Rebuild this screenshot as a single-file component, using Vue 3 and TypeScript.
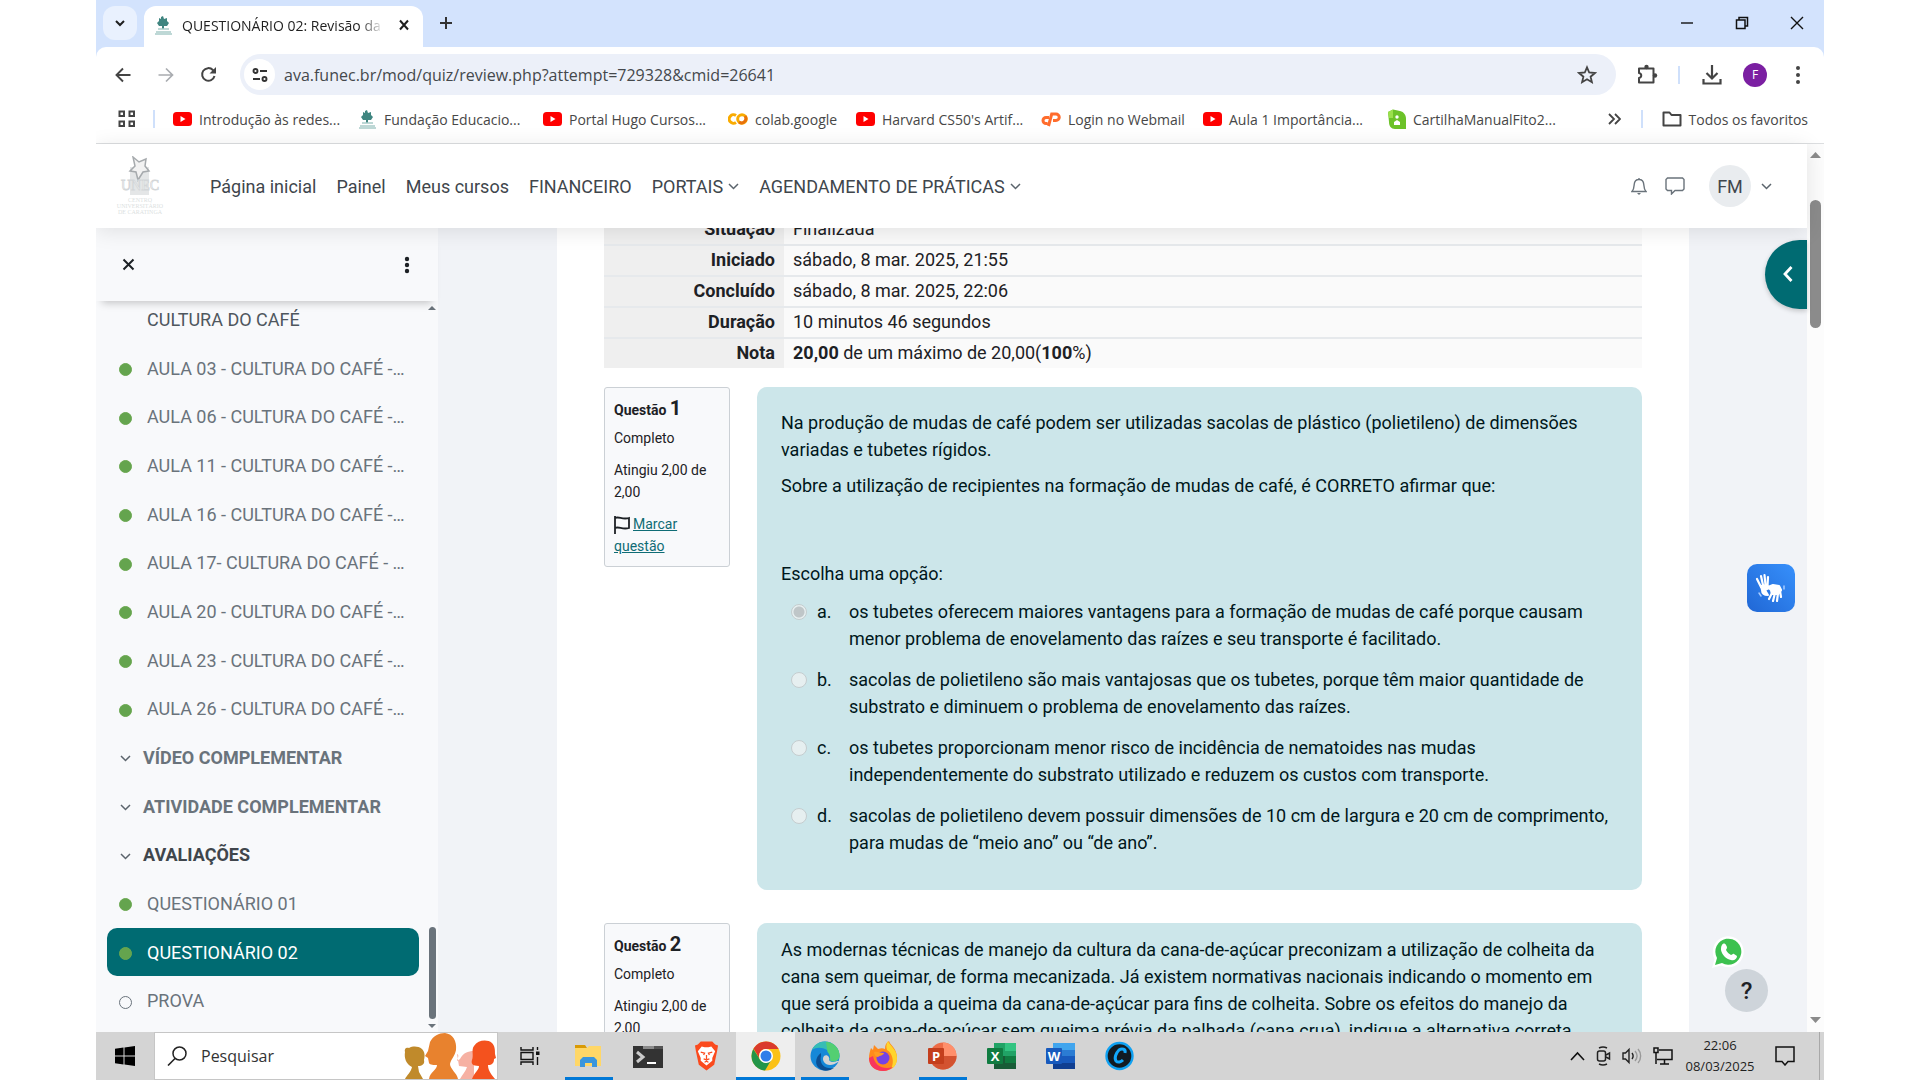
<script setup lang="ts">
import { ref } from 'vue'

type Bookmark = { label: string; icon: 'youtube' | 'funec' | 'colab' | 'cpanel' | 'issuu'; size: string }
type Row = { label: string; kind: 'first' | 'done' | 'todo' | 'section' | 'current-section' | 'active' }

const bookmarks: Bookmark[] = [
  { label: 'Introdução às redes...', icon: 'youtube', size: 'wide' },
  { label: 'Fundação Educacio...', icon: 'funec', size: 'wide' },
  { label: 'Portal Hugo Cursos...', icon: 'youtube', size: 'wide' },
  { label: 'colab.google', icon: 'colab', size: 'small' },
  { label: "Harvard CS50's Artif...", icon: 'youtube', size: 'wide' },
  { label: 'Login no Webmail', icon: 'cpanel', size: 'medium' },
  { label: 'Aula 1 Importância...', icon: 'youtube', size: 'wide' },
  { label: 'CartilhaManualFito2...', icon: 'issuu', size: 'wide' },
]

const rows: Row[] = [
  { label: 'CULTURA DO CAFÉ', kind: 'first' },
  { label: 'AULA 03 - CULTURA DO CAFÉ -…', kind: 'done' },
  { label: 'AULA 06 - CULTURA DO CAFÉ -…', kind: 'done' },
  { label: 'AULA 11 - CULTURA DO CAFÉ -…', kind: 'done' },
  { label: 'AULA 16 - CULTURA DO CAFÉ -…', kind: 'done' },
  { label: 'AULA 17- CULTURA DO CAFÉ - …', kind: 'done' },
  { label: 'AULA 20 - CULTURA DO CAFÉ -…', kind: 'done' },
  { label: 'AULA 23 - CULTURA DO CAFÉ -…', kind: 'done' },
  { label: 'AULA 26 - CULTURA DO CAFÉ -…', kind: 'done' },
  { label: 'VÍDEO COMPLEMENTAR', kind: 'section' },
  { label: 'ATIVIDADE COMPLEMENTAR', kind: 'section' },
  { label: 'AVALIAÇÕES', kind: 'current-section' },
  { label: 'QUESTIONÁRIO 01', kind: 'done' },
  { label: 'QUESTIONÁRIO 02', kind: 'active' },
  { label: 'PROVA', kind: 'todo' },
]

const options = [
  { key: 'a', text: 'os tubetes oferecem maiores vantagens para a formação de mudas de café porque causam menor problema de enovelamento das raízes e seu transporte é facilitado.' },
  { key: 'b', text: 'sacolas de polietileno são mais vantajosas que os tubetes, porque têm maior quantidade de substrato e diminuem o problema de enovelamento das raízes.' },
  { key: 'c', text: 'os tubetes proporcionam menor risco de incidência de nematoides nas mudas independentemente do substrato utilizado e reduzem os custos com transporte.' },
  { key: 'd', text: 'sacolas de polietileno devem possuir dimensões de 10 cm de largura e 20 cm de comprimento, para mudas de “meio ano” ou “de ano”.' },
]

const address = ref('ava.funec.br/mod/quiz/review.php?attempt=729328&cmid=26641')
const query = ref('')
const answer = ref('a')
</script>

<template>
  <div class="desktop">
    <header class="browser">
      <div class="tabstrip">
        <button class="tab-search" aria-label="Pesquisar guias">
          <svg width="12" height="12" viewBox="0 0 12 12"><path d="M2 4l4 4 4-4" fill="none" stroke="#1f1f1f" stroke-width="2" /></svg>
        </button>
        <div class="tab">
          <svg class="fav" width="17" height="19" viewBox="0 0 17 19"><path d="M6 1l2-1 1 3 3-1v3l2 2-2 3H9v3H7v-3H4L2 7l2-2V2l2 1z" fill="#3f8580" /><path d="M3 13h11M1 16h15M0 18h17" stroke="#a9cbc9" stroke-width="1.500" /></svg>
          <span class="tab-title">QUESTIONÁRIO 02: Revisão da t</span>
          <button class="plain" aria-label="Fechar guia">
            <svg width="12" height="12" viewBox="0 0 12 12"><path d="M2 1.500l8 9M10 1.500l-8 9" stroke="#1f1f1f" stroke-width="2" /></svg>
          </button>
        </div>
        <button class="plain new-tab" aria-label="Nova guia">
          <svg width="14" height="14" viewBox="0 0 14 14"><path d="M7 1v12M1 7h12" stroke="#333" stroke-width="2" /></svg>
        </button>
        <div class="window-buttons">
          <button class="plain" aria-label="Minimizar"><svg width="14" height="14" viewBox="0 0 14 14"><path d="M1 7h12" stroke="#111" stroke-width="1.4" /></svg></button>
          <button class="plain" aria-label="Restaurar"><svg width="14" height="14" viewBox="0 0 14 14"><path d="M4 4V1.500h8.500v8.500H10M1.500 4H10v8.500H1.500z" fill="none" stroke="#111" stroke-width="1.500" /></svg></button>
          <button class="plain" aria-label="Fechar"><svg width="14" height="14" viewBox="0 0 14 14"><path d="M1 1l12 12M13 1L1 13" stroke="#111" stroke-width="1.400" /></svg></button>
        </div>
      </div>

      <div class="toolbar-wrap">
        <div class="toolbar">
          <button class="plain step" aria-label="Voltar"><svg width="16" height="16" viewBox="0 0 16 16"><path d="M15.500 8H2M8 1.500L1.500 8 8 14.500" fill="none" stroke="#444" stroke-width="1.900" /></svg></button>
          <button class="plain step" aria-label="Avançar"><svg width="16" height="16" viewBox="0 0 16 16"><path d="M.5 8H14M8 1.500L14.500 8 8 14.500" fill="none" stroke="#a9acb0" stroke-width="1.700" /></svg></button>
          <button class="plain step" aria-label="Recarregar"><svg width="17" height="17" viewBox="0 0 17 17"><path d="M14.500 10a6.300 6.300 0 1 1-1.600-6L15 6" fill="none" stroke="#444" stroke-width="2" /><path d="M16 1v6.500H9.500z" fill="#444" /></svg></button>
          <div class="address">
            <span class="site-info"><svg width="16" height="16" viewBox="0 0 16 16" fill="none" stroke="#333" stroke-width="1.900"><circle cx="3.500" cy="4" r="2" /><path d="M8 4h7M1 12h7" /><circle cx="12.500" cy="12" r="2" /></svg></span>
            <input v-model="address" aria-label="Endereço" />
            <button class="plain" aria-label="Favoritar"><svg width="20" height="20" viewBox="0 0 20 20"><path d="M10 2.300l2.200 5.200 5.700.5-4.300 3.700 1.300 5.500-4.900-2.900-4.900 2.900 1.300-5.500L2.100 8l5.700-.5z" fill="none" stroke="#444" stroke-width="1.800" /></svg></button>
          </div>
          <button class="plain ext" aria-label="Extensões"><svg width="22" height="22" viewBox="0 0 22 22"><path d="M3 4.500h14.500V10v8.500H3v-4.500c3-.5 3-4.500 0-5z" fill="none" stroke="#444" stroke-width="2" stroke-linejoin="round" /><circle cx="10.500" cy="3" r="2.200" fill="#444" /><circle cx="19" cy="11.500" r="2.200" fill="#444" /></svg></button>
          <i class="divider"></i>
          <button class="plain download" aria-label="Downloads"><svg width="20" height="22" viewBox="0 0 20 22" fill="none" stroke="#444" stroke-width="2.200"><path d="M10 1v13M4.500 9l5.500 5.500L15.500 9M1.500 15v4.500h17V15" /></svg></button>
          <button class="profile" aria-label="Perfil">F</button>
          <button class="plain more" aria-label="Menu"><svg width="6" height="18" viewBox="0 0 6 18" fill="#444"><circle cx="3" cy="2" r="2" /><circle cx="3" cy="9" r="2" /><circle cx="3" cy="16" r="2" /></svg></button>
        </div>

        <nav class="bookmarks" aria-label="Favoritos">
          <button class="plain apps" aria-label="Apps"><svg width="18" height="18" viewBox="0 0 18 18" fill="none" stroke="#444" stroke-width="2"><path d="M1.500 1.500h4.500v4.500H1.500zM11.500 1.500H16v4.500h-4.500zM1.500 11.500h4.500V16H1.500zM11.500 11.500H16V16h-4.500z" /></svg></button>
          <i class="divider"></i>
          <div class="bookmark-list">
            <a v-for="b in bookmarks" :key="b.label" href="#" class="bookmark" :class="b.size">
              <svg v-if="b.icon === 'youtube'" width="19" height="14" viewBox="0 0 19 14"><rect width="19" height="14" rx="3.500" fill="#f00" /><path d="M7.500 4v6l5-3z" fill="#fff" /></svg>
              <svg v-else-if="b.icon === 'funec'" width="19" height="19" viewBox="0 0 17 19"><path d="M6 1l2-1 1 3 3-1v3l2 2-2 3H9v3H7v-3H4L2 7l2-2V2l2 1z" fill="#3f8580" /><path d="M3 13h11M1 16h15M0 18h17" stroke="#a9cbc9" stroke-width="1.500" /></svg>
              <svg v-else-if="b.icon === 'colab'" width="20" height="14" viewBox="0 0 20 14" fill="none" stroke-width="3"><path d="M8 3.500a4.300 4.300 0 1 0 0 7" stroke="#f9ab00" /><circle cx="14" cy="7" r="4.300" stroke="#f9ab00" /><path d="M11 10a4.300 4.300 0 0 0 6-6" stroke="#e8710a" /></svg>
              <svg v-else-if="b.icon === 'cpanel'" width="20" height="15" viewBox="0 0 20 15" fill="none" stroke="#ff6c2c" stroke-width="3"><path d="M8 5.500H5a3 3 0 0 0 0 6h1.500M7.500 14l3.200-12H15a3 3 0 0 1 0 6.500h-3" /></svg>
              <svg v-else width="18" height="20" viewBox="0 0 18 20"><path d="M0 3l5-2.500L12 2c4 1 6 4 6 8v10H7c-4 0-6-3-6-7z" fill="#6cc229" /><path d="M0 3l5-2.500V9H1z" fill="#9be04c" /><circle cx="9" cy="8" r="1.700" fill="#fff" /><path d="M6 16v-3l3-2 3 2v3z" fill="#fff" /></svg>
              <span>{{ b.label }}</span>
            </a>
          </div>
          <button class="plain overflow" aria-label="Mais favoritos"><svg width="13" height="12" viewBox="0 0 13 12"><path d="M1 1l5 5-5 5M7 1l5 5-5 5" fill="none" stroke="#444" stroke-width="1.800" /></svg></button>
          <i class="divider"></i>
          <button class="plain all-bookmarks"><svg width="20" height="16" viewBox="0 0 20 16"><path d="M1.500 1.500h6l2 2.500h9v10.500h-17z" fill="none" stroke="#444" stroke-width="2" stroke-linejoin="round" /></svg>Todos os favoritos</button>
        </nav>
      </div>
    </header>

    <div class="viewport">
      <div class="page">
        <header class="navbar">
          <a href="#" class="logo" aria-label="UNEC">
            <svg width="48" height="64" viewBox="0 0 48 64"><rect x="14" y="11" width="19" height="28" fill="#e4e6e7" /><path d="M17 1l6 5 7-3-1 7 4 5-6 1-5 8-2-8-6-1 5-5z" fill="#f2f2f2" stroke="#a6aaad" stroke-width="1.500" /><text x="24" y="34" text-anchor="middle" font-size="14" font-family="Liberation Serif, serif" fill="#fff" stroke="#d3d6d8" stroke-width=".8">UNEC</text><g text-anchor="middle" font-family="Liberation Serif, serif" font-size="6" fill="#dcdfdf"><text x="24" y="46">CENTRO</text><text x="24" y="52">UNIVERSITÁRIO</text><text x="24" y="58">DE CARATINGA</text></g></svg>
          </a>
          <nav class="links">
            <a href="#">Página inicial</a>
            <a href="#">Painel</a>
            <a href="#">Meus cursos</a>
            <a href="#">FINANCEIRO</a>
            <a href="#">PORTAIS<svg class="chev" width="11" height="7" viewBox="0 0 11 7"><path d="M1 1l4.500 4.500L10 1" /></svg></a>
            <a href="#">AGENDAMENTO DE PRÁTICAS<svg class="chev" width="11" height="7" viewBox="0 0 11 7"><path d="M1 1l4.500 4.500L10 1" /></svg></a>
          </nav>
          <div class="user">
            <button class="plain" aria-label="Notificações"><svg width="16" height="18" viewBox="0 0 16 18"><path d="M8 1v1.500M1 14.500h14c-2-2-2-4-2.200-7C12.600 4.500 11 2.500 8 2.500s-4.600 2-4.800 5C3 10.500 3 12.500 1 14.500z" fill="none" stroke="#6a737b" stroke-width="1.400" /><path d="M6 16h4l-2 2z" fill="#6a737b" /></svg></button>
            <button class="plain chat" aria-label="Mensagens"><svg width="20" height="18" viewBox="0 0 20 18"><path d="M2.500 1h15l1.500 1.500V12l-1.500 1.500H10L6.500 17v-3.500h-4L1 12V2.500z" fill="none" stroke="#6a737b" stroke-width="1.400" /></svg></button>
            <button class="initials">FM</button>
            <svg class="chev" width="11" height="7" viewBox="0 0 11 7"><path d="M1 1l4.500 4.500L10 1" /></svg>
          </div>
        </header>

        <div class="body">
          <aside class="drawer">
            <div class="drawer-head">
              <button class="plain" aria-label="Fechar índice"><svg width="13" height="13" viewBox="0 0 13 13"><path d="M1.500 1.500l10 10M11.500 1.500l-10 10" stroke="#1d2125" stroke-width="2" /></svg></button>
              <button class="plain" aria-label="Opções"><svg width="6" height="18" viewBox="0 0 6 18" fill="#1d2125"><circle cx="3" cy="3" r="2.200" /><circle cx="3" cy="9" r="2.200" /><circle cx="3" cy="15" r="2.200" /></svg></button>
            </div>
            <div class="drawer-body">
              <ul class="index">
                <li v-for="r in rows" :key="r.label" :class="r.kind">
                  <span class="mark">
                    <svg v-if="r.kind.endsWith('section')" class="chev" width="11" height="7" viewBox="0 0 11 7"><path d="M1 1l4.500 4.500L10 1" /></svg>
                    <i v-else-if="r.kind !== 'first'" class="dot"></i>
                  </span>
                  <a href="#">{{ r.label }}</a>
                </li>
              </ul>
              <div class="thin-bar">
                <svg width="8" height="5" viewBox="0 0 8 5"><path d="M0 5l4-4 4 4z" fill="#6a737b" /></svg>
                <i></i>
                <svg width="8" height="5" viewBox="0 0 8 5"><path d="M0 0l4 4 4-4z" fill="#6a737b" /></svg>
              </div>
            </div>
          </aside>

          <main class="main">
            <div class="card">
              <table class="summary">
                <tbody>
                  <tr><th scope="row">Situação</th><td>Finalizada</td></tr>
                  <tr><th scope="row">Iniciado</th><td>sábado, 8 mar. 2025, 21:55</td></tr>
                  <tr><th scope="row">Concluído</th><td>sábado, 8 mar. 2025, 22:06</td></tr>
                  <tr><th scope="row">Duração</th><td>10 minutos 46 segundos</td></tr>
                  <tr><th scope="row">Nota</th><td><b>20,00</b> de um máximo de 20,00(<b>100</b>%)</td></tr>
                </tbody>
              </table>

              <section class="question">
                <div class="info">
                  <h3>Questão <span>1</span></h3>
                  <p>Completo</p>
                  <p>Atingiu 2,00 de 2,00</p>
                  <p><svg width="16" height="18" viewBox="0 0 16 18"><path d="M1 0v18M1 2c4-2 7 2 14 0v10c-7 2-10-2-14 0" fill="none" stroke="#1d2125" stroke-width="1.800" /></svg><a href="#">Marcar questão</a></p>
                </div>
                <div class="formulation first-question">
                  <p>Na produção de mudas de café podem ser utilizadas sacolas de plástico (polietileno) de dimensões variadas e tubetes rígidos.</p>
                  <p>Sobre a utilização de recipientes na formação de mudas de café, é CORRETO afirmar que:</p>
                  <fieldset disabled>
                    <legend>Escolha uma opção:</legend>
                    <div v-for="o in options" :key="o.key" class="option">
                      <input :id="'q1' + o.key" v-model="answer" type="radio" name="q1" :value="o.key" />
                      <label :for="'q1' + o.key"><span>{{ o.key }}.</span><span>{{ o.text }}</span></label>
                    </div>
                  </fieldset>
                </div>
              </section>

              <section class="question">
                <div class="info">
                  <h3>Questão <span>2</span></h3>
                  <p>Completo</p>
                  <p>Atingiu 2,00 de 2,00</p>
                </div>
                <div class="formulation">
                  <p>As modernas técnicas de manejo da cultura da cana-de-açúcar preconizam a utilização de colheita da cana sem queimar, de forma mecanizada. Já existem normativas nacionais indicando o momento em que será proibida a queima da cana-de-açúcar para fins de colheita. Sobre os efeitos do manejo da colheita da cana-de-açúcar sem queima prévia da palhada (cana crua), indique a alternativa correta.</p>
                </div>
              </section>
            </div>
          </main>

          <button class="drawer-toggle" aria-label="Abrir gaveta"><svg width="10" height="18" viewBox="0 0 10 18"><path d="M8.500 2L2 9l6.500 7" fill="none" stroke="#fff" stroke-width="2.800" /></svg></button>
          <button class="libras" aria-label="Libras">
            <svg width="32" height="32" viewBox="0 0 32 32" fill="none" stroke="#fff" stroke-linecap="round" stroke-linejoin="round"><path d="M6 16L2 8M8 14L6 5M10.500 14L9.500 4M12.500 15L13 6" stroke-width="2.200" /><path d="M6 15l6-1 2 3-4 2 3 5c-4 0-6-2-6-5z" fill="#fff" stroke-width="2" /><path d="M13 16l5-2 6 1 2 4-3 4-6 0-1-4z" fill="#fff" stroke-width="2.200" /><path d="M17 22l-3 6M20 22l-2 8M23 22l-1 8M25 20l1 6" stroke-width="2.200" /><path d="M4 22l2 3M29 15v3" stroke="#a8cbff" stroke-width="1.500" /></svg>
          </button>
          <button class="whatsapp" aria-label="WhatsApp">
            <svg width="34" height="34" viewBox="0 0 34 34"><path d="M1 33l2.500-9A15.500 15.500 0 1 1 10 30.500z" fill="#fff" /><path d="M4 30l2-7A13 13 0 1 1 11 28z" fill="#3cc14f" /><path d="M11 10c1-2 3-2 4 0l1 2c0 2-1 2-1 3 1 2 3 4 5 5 1 0 2-2 3-1l3 2c0 3-3 5-6 4-5-1-9-5-10-10 0-2 0-4 1-5z" fill="#fff" /></svg>
          </button>
          <button class="help" aria-label="Ajuda">?</button>
        </div>
      </div>
      <div class="page-bar">
        <svg width="11" height="7" viewBox="0 0 11 7"><path d="M0 7l5.500-6L11 7z" fill="#8b8b8b" /></svg>
        <i></i>
        <svg width="11" height="7" viewBox="0 0 11 7"><path d="M0 0l5.500 6L11 0z" fill="#8b8b8b" /></svg>
      </div>
    </div>

    <footer class="taskbar">
      <button class="plain start" aria-label="Iniciar"><svg width="20" height="20" viewBox="0 0 20 20"><path d="M0 2.800l8.500-1.200v8H0zM9.500 1.500L20 0v9.600H9.500zM0 10.500h8.500v8L0 17.300zM9.500 10.500H20V20L9.500 18.600z" /></svg></button>
      <label class="search">
        <svg width="20" height="20" viewBox="0 0 20 20"><circle cx="12.500" cy="7.500" r="6.500" fill="none" stroke="#222" stroke-width="1.500" /><path d="M8 12.500L1 19.500" stroke="#222" stroke-width="1.600" /></svg>
        <input v-model="query" placeholder="Pesquisar" aria-label="Pesquisar" />
        <svg class="people" width="92" height="46" viewBox="0 0 92 46">
          <path d="M1 19c-1-4 2-5 4-4 4-2 9-2 13 1 3 3 3 7 2 11 1 4-2 6-6 6l1 6 4 7H1c2-4 6-7 7-12-6-3-8-9-7-15z" fill="#c08a2b" />
          <path d="M53 21c3 1 0 5 0 7l3-2c3-6 8-8 14-8v28H56c2-4 6-8 7-12l-8-1z" fill="#f6b1a3" />
          <path d="M26 9c3-6 9-9 15-9 8 1 12 8 11 17-1 6-5 9-6 14 0 5 7 9 8 15H25c1-7 8-9 8-14-3 0-7 0-8-2l-1-5-3-2 3-5z" fill="#e8822e" />
          <path d="M70 13c4-6 13-7 18-3 3 3 3 7 3 11l1 4-2 1c0 4-2 6-6 6 0 6 4 10 7 14H68c2-6 7-9 7-13-7 0-8-3-7-6 2-5-1-10 2-14z" fill="#f4521e" />
        </svg>
      </label>
      <div class="tasks">
        <button class="task" aria-label="Visão de tarefas"><svg width="20" height="20" viewBox="0 0 20 20" fill="none" stroke="#111" stroke-width="1.400"><path d="M1 1v3h12V1M1 19v-3h12v3M1 6.500h12v7H1zM17.500 1v3M17.500 11v8" /><path d="M16 5.500h3.500v3.500H16z" fill="#111" stroke="none" /></svg></button>
        <button class="task open" aria-label="Explorador"><svg width="27" height="23" viewBox="0 0 27 23"><path d="M0 0h10l2 3H0z" fill="#d99a06" /><path d="M0 3h12l2-2h12v20H0z" fill="#ffd767" /><path d="M5 22v-7l3-3h11l3 3v7h-5v-4h-7v4z" fill="#3a96dd" /></svg></button>
        <button class="task" aria-label="Terminal"><svg width="30" height="23" viewBox="0 0 30 23"><path d="M0 1h30v22H0z" fill="#333" /><path d="M10 1h11v3H10z" fill="#8b8b8b" /><path d="M21 1h9v3h-9z" fill="#555" /><path d="M4 7l6 5-6 5" fill="none" stroke="#ccc" stroke-width="3" /><path d="M14 18h9" stroke="#fff" stroke-width="2" /></svg></button>
        <button class="task" aria-label="Brave"><svg width="25" height="30" viewBox="0 0 26 30"><path d="M7 0h12l3 3 3 1-1 6-3 14-8 6-8-6L2 10 1 4l3-1z" fill="#fb4a1d" /><path d="M8 5l3 1h4l3-1 4 5-3 7 0 3-6 5-6-5 0-3-3-7z" fill="#fff" /><path d="M7 11l4 1 -1 2M19 11l-4 1 1 2M13 14v4M10 18l3 1 3-1M11 21.500l2-1 2 1" fill="none" stroke="#fb4a1d" stroke-width="1.300" /></svg></button>
        <button class="task focused" aria-label="Chrome"><svg width="30" height="30" viewBox="0 0 30 30"><circle cx="15" cy="15" r="14.500" fill="#fbc116" /><path d="M2.500 7.500A14.500 14.500 0 0 1 27.600 8H15a7 7 0 0 0-6.500 9.500z" fill="#da3a2c" /><path d="M2.300 8A14.500 14.500 0 0 0 14 29.500l6.500-11A7 7 0 0 1 9 18.500z" fill="#229549" /><circle cx="15" cy="15" r="7" fill="#fff" /><circle cx="15" cy="15" r="5.500" fill="#2f7de9" /></svg></button>
        <button class="task open" aria-label="Edge"><svg width="30" height="30" viewBox="0 0 30 30"><circle cx="15" cy="15" r="14.500" fill="#1688d8" /><path d="M2 9C6 0 17-2 24 4c5 4 7 11 4 15-3 3-8 2-9-1 2-2 2-7-2-9C12 6 6 6 2 9z" fill="#36bdb5" /><path d="M16 1c8 0 14 7 13.500 14-.5 4-4 6-9 5 0-7-3-9-3-9z" fill="#53cf72" /><path d="M11 15c-2 7 3 14 13 12-4 3-11 4-15 0-5-4-3-12 2-15z" fill="#0c4f93" /><path d="M30 20l-3 0c-3 2-7 1-8-1 1-3-2-6-5-4-3 4 1 9 6 9 3 0 5-1 8-3z" fill="#d4d4d4" /></svg></button>
        <button class="task" aria-label="Firefox"><svg width="29" height="30" viewBox="0 0 29 30"><path d="M2 7l2 2 1-5 4 4c3-1 5-1 7 0 0-4 1-6 4-8 1 4 8 7 8 17 0 8-6 13-14 13S0 25 0 17c0-4 1-7 2-10z" fill="#ff8a1c" /><path d="M19 0c1 4 9 8 9 17 0 5-2 9-6 11 4-8 1-16-4-19-1-3-1-6 1-9z" fill="#ffd52e" /><path d="M0 17c0 8 6 13 14 13 4 0 8-2 10-4-10 3-18-1-20-11z" fill="#f8365d" /><circle cx="14" cy="17" r="6.500" fill="#7542e5" /><path d="M5 11c3-1 6 1 10 1-1 3-4 2-6 4-2 0-4-2-4-5z" fill="#ff9b22" /></svg></button>
        <button class="task open" aria-label="PowerPoint"><svg width="29" height="28" viewBox="0 0 29 28"><circle cx="15" cy="14" r="13.500" fill="#ed6c47" /><path d="M15 .5A13.500 13.500 0 0 1 28.500 14H15z" fill="#ff8f6b" /><path d="M1.500 14h27a13.500 13.500 0 0 1-27 0z" fill="#d35230" /><rect y="6" width="16" height="16" rx="1" fill="#c43e1c" /><text x="8" y="19" class="glyph">P</text></svg></button>
        <button class="task" aria-label="Excel"><svg width="29" height="28" viewBox="0 0 29 28"><path d="M7 1h22v26H7z" fill="#21a366" /><path d="M18 1h11v8H18z" fill="#33c481" /><path d="M7 14h11v13H7z" fill="#185c37" /><path d="M18 14h11v13H18z" fill="#107c41" /><path d="M18 21h11v6H18z" fill="#185c37" /><rect y="6" width="16" height="16" rx="1" fill="#107c41" /><text x="8" y="19" class="glyph">X</text></svg></button>
        <button class="task" aria-label="Word"><svg width="29" height="28" viewBox="0 0 29 28"><path d="M7 1h22v7H7z" fill="#41a5ee" /><path d="M7 8h22v6H7z" fill="#2b7cd3" /><path d="M7 14h22v7H7z" fill="#185abd" /><path d="M7 21h22v6H7z" fill="#103f91" /><rect y="6" width="16" height="16" rx="1" fill="#185abd" /><text x="8" y="19" class="glyph">W</text></svg></button>
        <button class="task" aria-label="Cuttlefish"><svg width="29" height="30" viewBox="0 0 29 30"><circle cx="14.500" cy="15" r="13" fill="#111b22" stroke="#0fa1f2" stroke-width="2.400" /><path d="M20 12c1-4-3-5-6-3-3 3-5 8-3 11 2 2 5 1 7-1" fill="none" stroke="#12a8fb" stroke-width="3" /></svg></button>
      </div>
      <div class="tray">
        <button class="plain" aria-label="Ícones ocultos"><svg width="15" height="10" viewBox="0 0 15 10"><path d="M1 9l6.500-7L14 9" fill="none" stroke="#111" stroke-width="1.600" /></svg></button>
        <button class="plain" aria-label="Câmera"><svg width="15" height="20" viewBox="0 0 15 20" fill="none" stroke="#222" stroke-width="1.500"><rect x="1.500" y="5" width="8" height="10" rx="2" /><path d="M10 9l3.500-2v6L10 11M3 2c3-1.500 5-1.500 8 0M3 18c3 1.500 5 1.500 8 0" /></svg></button>
        <button class="plain" aria-label="Volume"><svg width="20" height="18" viewBox="0 0 20 18" fill="none" stroke="#222" stroke-width="1.400"><path d="M1 6h2.500L7 2.500v13L3.500 12H1zM10 6c1.500 2 1.500 4 0 6" /><path d="M13 4c2.500 3 2.500 7 0 10M16 2c3.500 4 3.500 10 0 14" stroke="#999" /></svg></button>
        <button class="plain" aria-label="Rede"><svg width="20" height="18" viewBox="0 0 20 18" fill="none" stroke="#111" stroke-width="1.500"><path d="M6 3h13v9.500H4M11.500 12.500V17M7 17h9M1 1h4v4.500H1zM3 5.500V17" /></svg></button>
        <time class="clock"><span>22:06</span><span>08/03/2025</span></time>
        <button class="plain notes" aria-label="Notificações"><svg width="20" height="20" viewBox="0 0 20 20"><path d="M1 1h18v14.500h-6L10 19l-3-3.500H1z" fill="none" stroke="#111" stroke-width="1.500" /></svg></button>
      </div>
    </footer>
  </div>
</template>

<style>
html,
body {
  margin: 0;
  background: #fff;
}
</style>

<style scoped>
* {
  box-sizing: border-box;
}
svg {
  display: block;
  flex: none;
}
button,
input {
  font: inherit;
  color: inherit;
}
a {
  color: inherit;
  text-decoration: none;
}
.plain {
  display: flex;
  align-items: center;
  justify-content: center;
  padding: 0;
  border: 0;
  background: none;
}
.chev path {
  fill: none;
  stroke: #5b646c;
  stroke-width: 1.5;
}
.desktop {
  display: flex;
  flex-direction: column;
  width: 90%;
  height: 100vh;
  margin: 0 auto;
  overflow: hidden;
  font-family: "Open Sans", "Noto Sans", sans-serif;
  color: #1f1f1f;
}

/* Browser chrome */
.browser {
  flex: none;
  background: #d3e3fd;
}
.tabstrip {
  display: flex;
  align-items: flex-start;
  height: 47px;
  padding: 6px 0 0 7px;
}
.tab-search {
  display: flex;
  align-items: center;
  justify-content: center;
  width: 34px;
  height: 34px;
  margin-right: 7px;
  padding: 0;
  border: 0;
  border-radius: 12px;
  background: #e9f1fe;
}
.tab {
  display: flex;
  align-items: center;
  width: 279px;
  height: 41px;
  padding: 0 13px 3px 11px;
  border-radius: 12px 12px 0 0;
  background: #fff;
}
.tab-title {
  flex: 1;
  margin: 0 14px 0 10px;
  overflow: hidden;
  font-size: 14px;
  white-space: nowrap;
  mask-image: linear-gradient(90deg, #000 88%, transparent);
}
.new-tab {
  width: 46px;
  height: 34px;
}
.window-buttons {
  display: flex;
  margin-left: auto;
}
.window-buttons .plain {
  width: 55px;
  height: 34px;
}
.toolbar-wrap {
  border-bottom: 1px solid #dcdee0;
  border-radius: 10px 10px 0 0;
  background: #fff;
}
.toolbar {
  display: flex;
  align-items: center;
  height: 55px;
  padding-left: 5px;
}
.step {
  width: 43px;
  height: 40px;
}
.address {
  display: flex;
  flex: 1;
  align-items: center;
  height: 41px;
  margin-left: 10px;
  padding: 0 19px 0 4px;
  border-radius: 21px;
  background: #ecf0f9;
}
.site-info {
  display: flex;
  align-items: center;
  justify-content: center;
  width: 31px;
  height: 31px;
  border-radius: 50%;
  background: #fff;
}
.address input {
  flex: 1;
  min-width: 0;
  margin-left: 9px;
  padding: 0;
  border: 0;
  outline: 0;
  background: none;
  font-size: 16px;
  color: #44484c;
}
.divider {
  width: 2px;
  height: 18px;
  background: #cfe0fb;
}
.ext {
  width: 62px;
}
.download {
  width: 63px;
}
.profile {
  width: 24px;
  height: 24px;
  padding: 0;
  border: 0;
  border-radius: 50%;
  background: #7b1fa2;
  color: #fff;
  font-size: 12px;
}
.more {
  width: 57px;
  padding-left: 5px;
}
.bookmarks {
  display: flex;
  align-items: center;
  height: 41px;
  padding: 0 16px 7px 22px;
  font-size: 14px;
  color: #474747;
}
.apps {
  margin-right: 17px;
}
.bookmark-list {
  display: flex;
  flex: 1;
  margin-left: 18px;
}
.bookmark {
  display: flex;
  flex: none;
  align-items: center;
  gap: 7px;
  white-space: nowrap;
}
.wide {
  width: 185px;
}
.small {
  width: 128px;
}
.medium {
  width: 162px;
}
.overflow {
  margin-right: 20px;
}
.all-bookmarks {
  gap: 7px;
  margin-left: 19px;
}

/* Page */
.viewport {
  display: flex;
  flex: 1;
  min-height: 0;
  font-family: Roboto, sans-serif;
  font-size: 18px;
}
.page {
  display: flex;
  flex: 1;
  flex-direction: column;
  min-width: 0;
}
.navbar {
  position: relative;
  z-index: 2;
  display: flex;
  flex: none;
  align-items: center;
  height: 84px;
  padding: 0 35px 0 20px;
  background: #fff;
  box-shadow: 0 3px 20px rgba(0, 0, 0, 0.1);
  color: #40464c;
}
.logo {
  padding-top: 4px;
}
.links {
  display: flex;
  gap: 20px;
  margin-left: 46px;
  white-space: nowrap;
}
.links a {
  display: flex;
  align-items: center;
  gap: 5px;
}
.user {
  display: flex;
  align-items: center;
  margin-left: auto;
}
.chat {
  margin: 0 24px 0 18px;
}
.initials {
  width: 42px;
  height: 42px;
  margin-right: 10px;
  padding: 0;
  border: 0;
  border-radius: 50%;
  background: #e9ecef;
}
.body {
  position: relative;
  display: flex;
  flex: 1;
  min-height: 0;
  background: #f1f3f7;
}
.page-bar {
  display: flex;
  flex-direction: column;
  align-items: center;
  width: 17px;
  padding: 7px 0 8px;
  background: #fcfcfc;
}
.page-bar i {
  width: 11px;
  height: 128px;
  margin: 42px 0 auto;
  border-radius: 6px;
  background: #8b8b8b;
}

/* Course index */
.drawer {
  display: flex;
  flex: none;
  flex-direction: column;
  width: 342px;
  background: #f8f9fb;
}
.drawer-head {
  position: relative;
  z-index: 1;
  display: flex;
  flex: none;
  align-items: center;
  justify-content: space-between;
  height: 73px;
  padding: 0 28px 0 26px;
  background: #f8f9fb;
  box-shadow: 0 8px 8px -6px rgba(0, 0, 0, 0.22);
}
.drawer-body {
  display: flex;
  flex: 1;
  min-height: 0;
  padding-right: 2px;
}
.index {
  display: flex;
  flex: 1;
  flex-direction: column;
  margin: -6px 9px 7px 11px;
  padding: 0;
  list-style: none;
  color: #6a737b;
}
.index li {
  display: flex;
  flex: 1;
  align-items: center;
  white-space: nowrap;
}
.mark {
  display: flex;
  justify-content: center;
  width: 37px;
  margin-right: 3px;
  padding-top: 3px;
}
.dot {
  width: 13px;
  height: 13px;
  border: 1px solid #6aa84f;
  border-radius: 50%;
  background: #64a44e;
}
.todo .dot {
  border-color: #6a737b;
  background: none;
}
.index .first {
  color: #4f575e;
}
.section,
.current-section {
  font-weight: 700;
}
.section .mark,
.current-section .mark {
  margin-right: -1px;
}
.current-section {
  color: #40464c;
}
.index .active {
  border-radius: 10px;
  background: #006b72;
  color: #fff;
}
.thin-bar {
  display: flex;
  flex-direction: column;
  align-items: center;
  width: 8px;
  padding: 4px 0 3px;
}
.thin-bar i {
  width: 7px;
  height: 92px;
  margin: auto 0 5px;
  border-radius: 4px;
  background: #6a737b;
}

/* Quiz review */
.main {
  flex: 1;
  min-width: 0;
  padding: 0 118px 0 119px;
  overflow: hidden;
}
.card {
  display: flow-root;
  height: 100%;
  padding: 0 47px;
  background: #fff;
  color: #1d2125;
}
.summary {
  width: 100%;
  height: 153px;
  margin-top: -13px;
  border-collapse: collapse;
  background: #fafafa;
}
.summary tr + tr {
  border-top: 2px solid #e6e9ec;
}
.summary th {
  width: 180px;
  padding: 0 9px 2px 0;
  background: #efefef;
  text-align: right;
}
.summary td {
  padding: 0 0 2px 9px;
}
.question {
  display: flex;
  align-items: flex-start;
  gap: 27px;
  margin: 19px 0 33px;
}
.info {
  flex: none;
  width: 126px;
  height: 180px;
  padding: 6px 9px 0;
  border: 1px solid #cbd0d5;
  border-radius: 3px;
  background: #f8f9fb;
  font-size: 14px;
  line-height: 22px;
}
.info h3 {
  margin: 0;
  font-size: 14px;
  line-height: 28px;
}
.info h3 span {
  font-size: 20px;
}
.info p {
  margin: 3px 0 9px;
}
.info p + p {
  margin-top: 10px;
}
.info svg {
  display: inline-block;
  margin-right: 3px;
  vertical-align: -5px;
}
.info a {
  color: #0f6c75;
  text-decoration: underline;
}
.formulation {
  flex: 1;
  min-width: 0;
  padding: 13px 24px 0;
  border-radius: 10px;
  background: #cce6ea;
  color: #00171b;
  line-height: 27px;
}
.formulation p {
  margin: 0 0 9px;
}
.first-question {
  height: 503px;
  padding-top: 22px;
}
fieldset {
  margin: 61px 0 0;
  padding: 0;
  border: 0;
}
legend {
  padding: 0 0 11px;
}
.option {
  display: flex;
  align-items: flex-start;
  margin-bottom: 14px;
  padding-left: 10px;
}
.option input {
  flex: none;
  width: 16px;
  height: 16px;
  margin: 6px 10px 0 0;
  appearance: none;
  border: 1px solid #c5cdcf;
  border-radius: 50%;
  background: #e6eff0;
}
.option input:checked {
  background: radial-gradient(circle, #bfc6c8 5px, #e6eff0 6px);
}
.option label {
  display: flex;
}
.option label span:first-child {
  flex: none;
  width: 32px;
}

/* Floating controls */
.drawer-toggle {
  position: absolute;
  top: 12px;
  right: 0;
  width: 42px;
  height: 69px;
  padding: 0 0 2px 18px;
  border: 0;
  border-radius: 35px 0 0 35px;
  background: #006b72;
  box-shadow: 0 2px 5px rgba(0, 0, 0, 0.2);
}
.libras {
  position: absolute;
  top: 336px;
  right: 12px;
  width: 48px;
  height: 48px;
  padding: 7px 8px 9px;
  border: 0;
  border-radius: 10px;
  background: linear-gradient(45deg, #2067d5, #3790fb);
}
.whatsapp {
  position: absolute;
  right: 62px;
  bottom: 63px;
  padding: 0;
  border: 0;
  background: none;
}
.help {
  position: absolute;
  right: 39px;
  bottom: 20px;
  width: 43px;
  height: 43px;
  padding: 0;
  border: 0;
  border-radius: 50%;
  background: #ced4da;
  font-size: 24px;
  font-weight: 500;
  color: #1d2125;
}

/* Taskbar */
.taskbar {
  display: flex;
  flex: none;
  align-items: stretch;
  height: 48px;
  background: #d4d4d4;
}
.start {
  width: 58px;
}
.search {
  display: flex;
  align-items: center;
  width: 344px;
  padding: 0 1px 0 12px;
  border: 1px solid #c6c6c6;
  background: #fff;
}
.search input {
  flex: 1;
  min-width: 0;
  margin-left: 14px;
  padding: 0;
  border: 0;
  outline: 0;
  background: none;
  font-size: 16px;
}
.search input::placeholder {
  color: #333;
  opacity: 1;
}
.tasks {
  display: flex;
  margin-left: 2px;
}
.task {
  display: flex;
  align-items: center;
  justify-content: center;
  width: 59px;
  padding: 0;
  border: 0;
  background: none;
}
.open {
  background: linear-gradient(#0078d7, #0078d7) center bottom / 48px 3px no-repeat;
}
.focused {
  background: linear-gradient(#0078d7, #0078d7) center bottom / 100% 3px no-repeat #eee;
}
.glyph {
  fill: #fff;
  font-size: 13px;
  font-weight: 700;
  text-anchor: middle;
}
.tray {
  display: flex;
  align-items: center;
  gap: 11px;
  margin-right: 4px;
  margin-left: auto;
  padding-right: 24px;
  border-right: 1px solid #a8a8a8;
}
.clock {
  display: flex;
  flex-direction: column;
  align-items: center;
  width: 72px;
  font-size: 13px;
  line-height: 21px;
}
.notes {
  margin-left: 8px;
}
</style>
